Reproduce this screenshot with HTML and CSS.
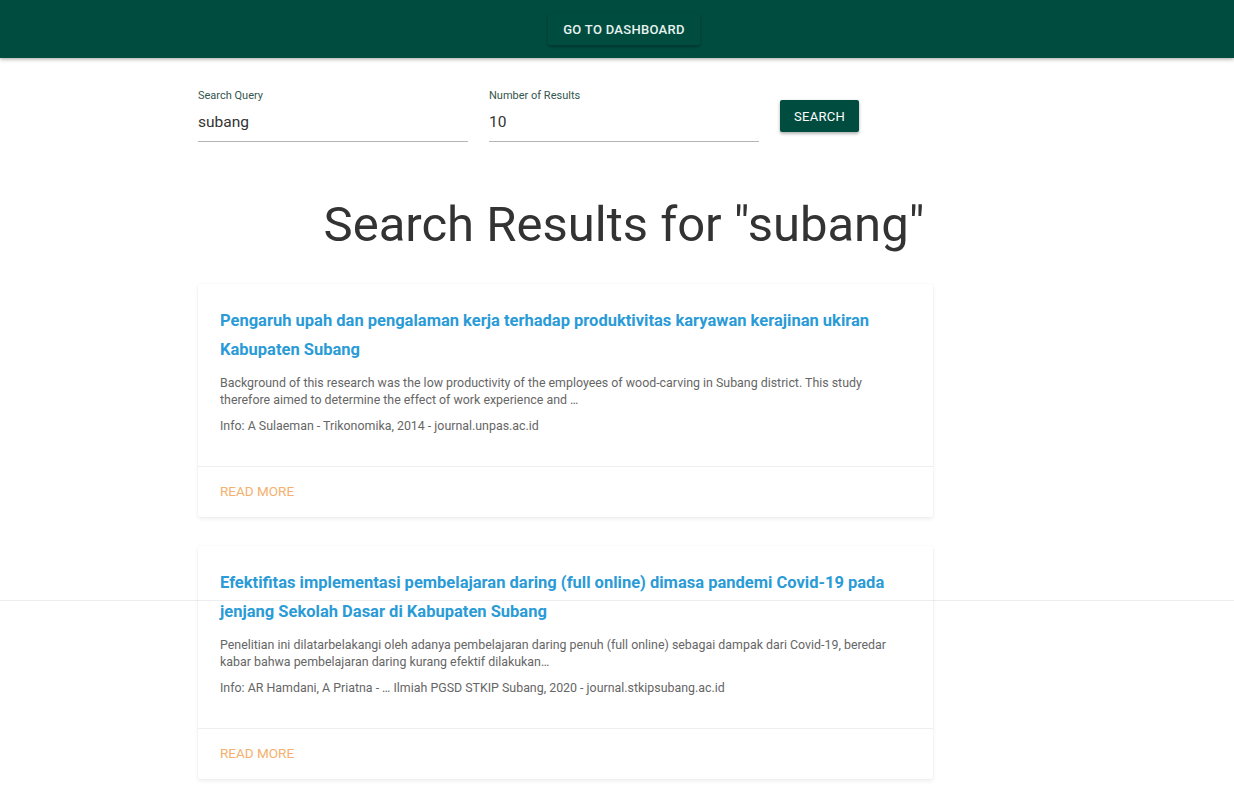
FILE: index.html
```html
<!DOCTYPE html>
<html>
<head>
<meta charset="utf-8">
<link rel="stylesheet" href="styles.css">
</head>
<body>
<header class="nav">
  <a class="btn nav-btn" href="#">GO TO DASHBOARD</a>
</header>
<main class="page">
  <form class="container search-form">
    <div class="field">
      <label>Search Query</label>
      <div class="input">subang</div>
    </div>
    <div class="field">
      <label>Number of Results</label>
      <div class="input">10</div>
    </div>
    <button class="btn search-btn" type="button">SEARCH</button>
  </form>
  <h2 class="title">Search Results for "subang"</h2>
  <div class="container results">
    <div class="card">
      <div class="card-content">
        <h3 class="card-title">Pengaruh upah dan pengalaman kerja terhadap produktivitas karyawan kerajinan ukiran Kabupaten Subang</h3>
        <p class="snippet">Background of this research was the low productivity of the employees of wood-carving in Subang district. This study therefore aimed to determine the effect of work experience and …</p>
        <p class="info">Info: A Sulaeman - Trikonomika, 2014 - journal.unpas.ac.id</p>
      </div>
      <div class="card-action"><a href="#">READ MORE</a></div>
    </div>
    <div class="card">
      <div class="card-content">
        <h3 class="card-title">Efektifitas implementasi pembelajaran daring (full online) dimasa pandemi Covid-19 pada jenjang Sekolah Dasar di Kabupaten Subang</h3>
        <p class="snippet">Penelitian ini dilatarbelakangi oleh adanya pembelajaran daring penuh (full online) sebagai dampak dari Covid-19, beredar kabar bahwa pembelajaran daring kurang efektif dilakukan…</p>
        <p class="info">Info: AR Hamdani, A Priatna - … Ilmiah PGSD STKIP Subang, 2020 - journal.stkipsubang.ac.id</p>
      </div>
      <div class="card-action"><a href="#">READ MORE</a></div>
    </div>
  </div>
</main>
<div class="seam"></div>
</body>
</html>
```
FILE: styles.css
```css
* { box-sizing: border-box; }
html, body { margin: 0; padding: 0; background: #fff; }
body { font-family: Roboto, "Liberation Sans", sans-serif; color: #333; overflow: hidden; height: 794px; position: relative; }

.nav {
  height: 58px;
  background: #004d40;
  display: flex;
  justify-content: center;
  align-items: center;
  padding-left: 14px;
  box-shadow: 0 2px 4px rgba(0,0,0,0.2), 0 1px 2px rgba(0,0,0,0.12);
}
.btn {
  display: inline-flex;
  align-items: center;
  justify-content: center;
  background: #004d40;
  color: #fff;
  text-decoration: none;
  border: none;
  border-radius: 2px;
  font-family: Roboto, "Liberation Sans", sans-serif;
  letter-spacing: 0.3px;
  box-shadow: 0 2px 3px rgba(0,0,0,0.22), 0 1px 4px rgba(0,0,0,0.12);
}
.nav-btn {
  height: 32px;
  padding: 0 15px;
  font-size: 13px;
  font-weight: 500;
  color: #e8f3f0;
}

.container { width: 735px; margin-left: 198px; }

.search-form {
  display: flex;
  align-items: flex-start;
  gap: 21px;
  margin-top: 31px;
}
.field { width: 270px; }
.field label {
  display: block;
  font-size: 11px;
  color: #33564d;
  line-height: 13px;
}
.input {
  font-size: 15.5px;
  color: #333;
  line-height: 20px;
  margin-top: 10px;
  padding-bottom: 9px;
  border-bottom: 1px solid #b5b5b5;
}
.search-btn {
  margin-top: 11px;
  height: 32px;
  padding: 0 14px;
  font-size: 13px;
  font-weight: 400;
  cursor: pointer;
}

.title {
  margin: 51px 0 0 0;
  text-align: center;
  font-weight: 400;
  font-size: 49px;
  line-height: 64px;
  color: #333;
  padding-left: 14px;
  white-space: nowrap;
}

.results { margin-top: 27px; display: flex; flex-direction: column; gap: 29px; }
.card {
  background: #fff;
  border-radius: 2px;
  box-shadow: 0 2px 4px rgba(0,0,0,0.07), 0 0 2px rgba(0,0,0,0.06);
}
.card-content { padding: 22px 22px 31px 22px; }
.card-title {
  margin: 0;
  font-size: 16.5px;
  font-weight: 700;
  line-height: 29px;
  color: #2a9bd6;
}
.snippet {
  margin: 10px 0 0 0;
  font-size: 12.4px;
  line-height: 17px;
  color: #666;
}
.info {
  margin: 9px 0 0 0;
  font-size: 12.4px;
  line-height: 17px;
  color: #666;
}
.card-action {
  border-top: 1px solid #eee;
  height: 51px;
  display: flex;
  align-items: center;
  padding: 0 22px;
  margin-top: 1px;
}
.card-action a {
  font-size: 13.5px;
  color: #f5b06e;
  text-decoration: none;
  margin-top: -3px;
}
.seam {
  position: absolute;
  left: 0; right: 0;
  top: 600px;
  height: 1px;
  background: rgba(0,0,0,0.07);
}
```
